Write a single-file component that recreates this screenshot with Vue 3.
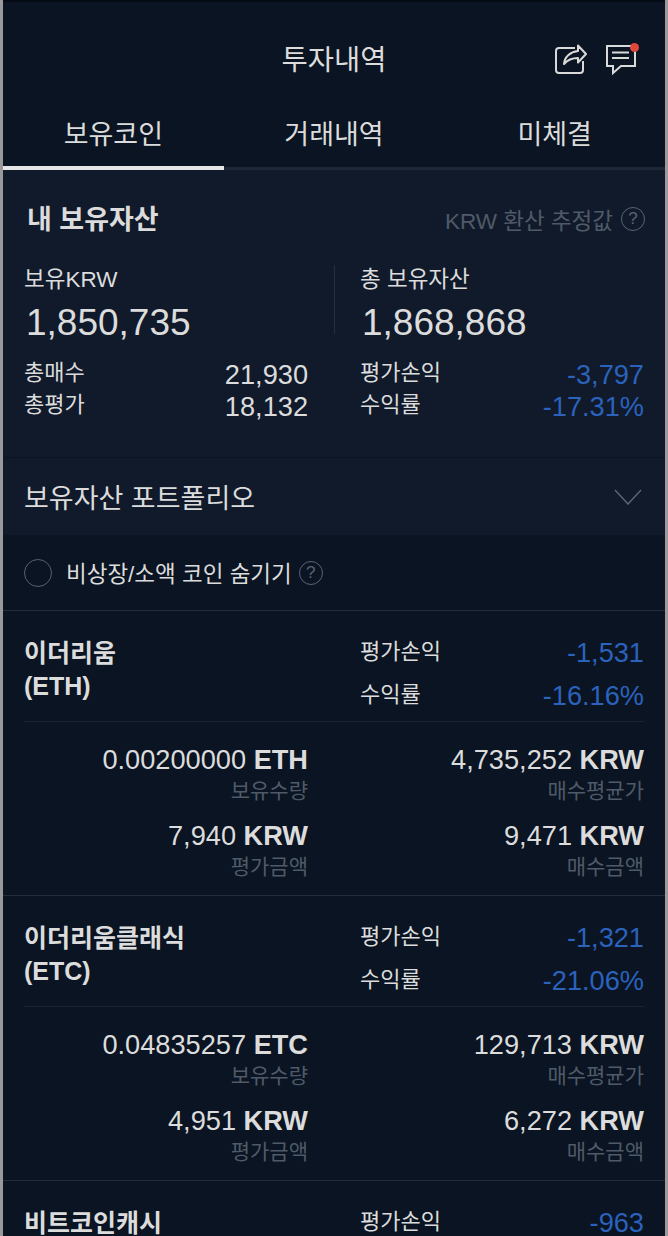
<script setup>
const coins = [
  { name: '이더리움', sym: 'ETH', pl: '-1,531', rate: '-16.16%', qty: '0.00200000', avg: '4,735,252', val: '7,940', buy: '9,471' },
  { name: '이더리움클래식', sym: 'ETC', pl: '-1,321', rate: '-21.06%', qty: '0.04835257', avg: '129,713', val: '4,951', buy: '6,272' },
  { name: '비트코인캐시', sym: 'BCH', pl: '-963', rate: '', qty: '', avg: '', val: '', buy: '' }
]
</script>

<template>
  <div class="page">
    <header class="head">
      <h1 class="title">투자내역</h1>
      <div class="head-icons">
        <svg width="34" height="34" viewBox="0 0 34 34" fill="none" stroke="#d9d9d9" stroke-width="2">
          <path d="M22 5H6a3 3 0 0 0-3 3v19a3 3 0 0 0 3 3h21a3 3 0 0 0 3-3V18" />
          <path d="M25 2.500L33 11l-8 8.500V15c-7 0-11 2.500-14 6 .5-7 6-12 14-13Z" fill="#0a1422" stroke-linejoin="round" />
        </svg>
        <svg width="32" height="34" viewBox="0 0 32 34" fill="none" stroke="#d9d9d9" stroke-width="2">
          <path d="M2 3H30V23H16L8 30V23H2Z" />
          <path d="M7 9.500H24M7 15H24" />
        </svg>
        <span class="dot"></span>
      </div>
    </header>

    <nav class="tabs">
      <div class="tab active">보유코인</div>
      <div class="tab">거래내역</div>
      <div class="tab">미체결</div>
    </nav>

    <section class="summary">
      <div class="sum-head">
        <h2 class="sum-title">내 보유자산</h2>
        <div class="estimate">
          KRW 환산 추정값
          <span class="help help-lg">?</span>
        </div>
      </div>
      <div class="sum-grid">
        <div class="sum-col left">
          <div class="label">보유KRW</div>
          <div class="big">1,850,735</div>
          <div class="kv kv-first"><span>총매수</span><span class="num">21,930</span></div>
          <div class="kv"><span>총평가</span><span class="num">18,132</span></div>
        </div>
        <div class="sum-col right">
          <div class="label">총 보유자산</div>
          <div class="big">1,868,868</div>
          <div class="kv kv-first"><span>평가손익</span><span class="num blue">-3,797</span></div>
          <div class="kv"><span>수익률</span><span class="num blue">-17.31%</span></div>
        </div>
      </div>
    </section>

    <section class="portfolio">
      <span>보유자산 포트폴리오</span>
      <svg width="28" height="16" viewBox="0 0 28 16" fill="none" stroke="#5a6472" stroke-width="1.500">
        <path d="M1 1l13 14L27 1" />
      </svg>
    </section>

    <section class="hide-row">
      <span class="radio"></span>
      <span class="hide-text">비상장/소액 코인 숨기기</span>
      <span class="help help-sm">?</span>
    </section>

    <section v-for="c in coins" :key="c.sym" class="coin">
      <div class="coin-top">
        <div class="coin-name">{{ c.name }}<br />({{ c.sym }})</div>
        <div class="coin-pl">
          <div class="pl-row"><span class="pl-label">평가손익</span><span class="blue num">{{ c.pl }}</span></div>
          <div class="pl-row"><span class="pl-label">수익률</span><span class="blue num">{{ c.rate }}</span></div>
        </div>
      </div>
      <div class="coin-rule"></div>
      <div class="cells">
        <div class="cell"><div class="amt">{{ c.qty }} <b>{{ c.sym }}</b></div><div class="cap">보유수량</div></div>
        <div class="cell"><div class="amt">{{ c.avg }} <b>KRW</b></div><div class="cap">매수평균가</div></div>
        <div class="cell"><div class="amt">{{ c.val }} <b>KRW</b></div><div class="cap">평가금액</div></div>
        <div class="cell"><div class="amt">{{ c.buy }} <b>KRW</b></div><div class="cap">매수금액</div></div>
      </div>
    </section>
  </div>
</template>

<style>
html, body { margin: 0; background: #0a1422; overflow: hidden; }
</style>

<style scoped>
.page {
  width: 668px;
  height: 1236px;
  box-sizing: border-box;
  overflow: hidden;
  border-left: 3px solid #9a9a9a;
  border-right: 3px solid #9a9a9a;
  background: #0a1422;
  color: #dcdcdc;
  font-family: "Liberation Sans", "Noto Sans CJK KR", sans-serif;
}
.head {
  position: relative;
  height: 100px;
  display: flex;
  align-items: center;
  justify-content: center;
  padding-top: 18px;
  box-sizing: border-box;
  border-top: 2px solid #050b15;
}
.title { margin: 0; font-size: 28.500px; font-weight: 400; line-height: 40px; }
.head-icons { position: absolute; left: 550px; top: 41px; display: flex; gap: 18px; }
.dot { position: absolute; right: -1.500px; top: -0.500px; width: 9px; height: 9px; border-radius: 50%; background: #e0483e; }
.tabs {
  display: flex;
  height: 70px;
  box-sizing: border-box;
  border-bottom: 3px solid #1d2735;
}
.tab {
  flex: 1;
  height: 70px;
  box-sizing: border-box;
  padding-top: 3px;
  text-align: center;
  font-size: 27px;
  line-height: 64px;
  margin-bottom: -3px;
  border-bottom: 4px solid transparent;
}
.tab.active { border-bottom-color: #e6e6e6; }
.summary {
  background: #101a2b;
  height: 288px;
  padding: 0 21px;
  box-sizing: border-box;
  border-bottom: 1px solid #0a1422;
}
.sum-head { display: flex; justify-content: space-between; align-items: center; padding: 29px 0 0 3px; height: 42px; }
.sum-title { margin: 0; font-size: 27px; font-weight: 700; line-height: 42px; }
.estimate { display: flex; align-items: center; gap: 8px; margin: -3px -1px 0 0; font-size: 22.500px; color: #4f5a68; }
.help { display: inline-flex; align-items: center; justify-content: center; border: 1.500px solid #5a6472; border-radius: 50%; color: #5a6472; box-sizing: border-box; }
.help-lg { width: 24px; height: 24px; font-size: 17px; }
.help-sm { width: 24px; height: 24px; font-size: 17px; margin-left: 7px; }
.sum-grid { display: flex; margin-top: 24px; }
.sum-col { width: 284px; }
.sum-col.right { margin-left: 52px; position: relative; }
.sum-col.right::before { content: ""; position: absolute; left: -26px; top: 0; height: 69px; width: 1px; background: #242e3d; }
.label { font-size: 22.500px; line-height: 30px; }
.big { font-size: 37px; line-height: 46px; margin: 5px 0 0 2px; }
.kv { display: flex; justify-content: space-between; align-items: center; font-size: 22px; line-height: 32px; height: 32px; }
.kv-first { margin-top: 11px; }
.num { font-size: 27.200px; line-height: 26px; padding-top: 4px; }
.blue { color: #2a62bc; }
.portfolio {
  background: #101a2b;
  height: 77px;
  display: flex;
  align-items: center;
  justify-content: space-between;
  padding: 0 23px 0 21px;
  font-size: 27px;
}
.hide-row {
  height: 76px;
  box-sizing: border-box;
  display: flex;
  align-items: center;
  padding-left: 21px;
  border-bottom: 1px solid #232d3c;
}
.radio { width: 28px; height: 28px; border-radius: 50%; border: 1.500px solid #56606e; box-sizing: border-box; margin-right: 14px; }
.hide-text { font-size: 22.500px; padding-bottom: 2px; }
.coin { height: 285px; box-sizing: border-box; padding: 18px 21px 0; border-bottom: 1px solid #232d3c; }
.coin-top { display: flex; height: 92px; }
.coin-name { width: 336px; padding-top: 8px; box-sizing: border-box; font-size: 25px; font-weight: 700; line-height: 33px; }
.coin-pl { flex: 1; }
.pl-row { display: flex; justify-content: space-between; align-items: center; font-size: 22px; height: 43px; }
.pl-label { padding-bottom: 3px; }
.coin-rule { height: 1px; background: #1a2432; }
.cells { display: grid; grid-template-columns: 284px 336px; margin-top: 19px; row-gap: 12px; }
.cell { text-align: right; }
.amt { font-size: 27.200px; line-height: 34px; padding-top: 2px; }
.amt b { font-weight: 700; }
.cap { font-size: 21px; line-height: 28px; color: #4f5a68; }
</style>
